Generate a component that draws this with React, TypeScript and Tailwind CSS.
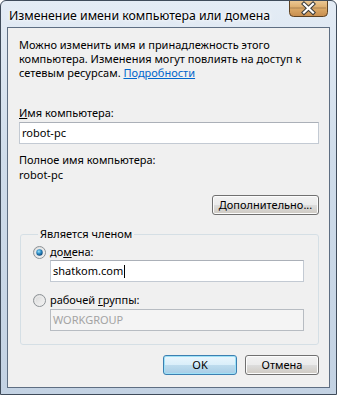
import React from 'react';

const font = "font-['Noto_Sans','Liberation_Sans',sans-serif]";

function Radio({ checked }: { checked?: boolean }) {
  return (
    <svg width="13" height="13" viewBox="0 0 13 13" className="shrink-0">
      <defs>
        <linearGradient id={checked ? 'rg1' : 'rg0'} x1="0" y1="0" x2="1" y2="1">
          <stop offset="0" stopColor="#d4d4d4" />
          <stop offset="1" stopColor="#f9f9f9" />
        </linearGradient>
        <radialGradient id="dot" cx="0.4" cy="0.35" r="0.7">
          <stop offset="0" stopColor="#9fe4fb" />
          <stop offset="0.5" stopColor="#2a8ac4" />
          <stop offset="1" stopColor="#0c3f6e" />
        </radialGradient>
      </defs>
      <circle cx="6.5" cy="6.5" r="6" fill={`url(#${checked ? 'rg1' : 'rg0'})`} stroke="#8d9296" />
      <circle cx="6.5" cy="6.5" r="4.3" fill="none" stroke="#ececec" strokeWidth="1" />
      {checked && <circle cx="6.5" cy="6.5" r="3.2" fill="url(#dot)" />}
    </svg>
  );
}

function Btn({ children, w, primary }: { children: React.ReactNode; w: string; primary?: boolean }) {
  return (
    <div
      className={`${w} h-[20px] rounded-[3px] border flex items-center justify-center text-[11px] leading-[14px] text-black ${
        primary
          ? 'border-[#3c7fb1] bg-[linear-gradient(#eaf6fd_0%,#d9eefa_50%,#bedcee_50%,#a7cde6_100%)] shadow-[inset_0_0_0_1px_#9ee1f7]'
          : 'border-[#707070] bg-[linear-gradient(#f2f2f2_0%,#ebebeb_50%,#dddddd_50%,#cfcac2_100%)] shadow-[inset_0_0_0_1px_#fcfcfc]'
      }`}
    >
      {children}
    </div>
  );
}

function CloseButton() {
  return (
    <svg width="39" height="17" viewBox="0 0 39 17">
      <defs>
        <linearGradient id="cb" x1="0" y1="0" x2="0" y2="1">
          <stop offset="0" stopColor="#edcc9a" />
          <stop offset="0.5" stopColor="#dcaa68" />
          <stop offset="1" stopColor="#c88d4e" />
        </linearGradient>
      </defs>
      <path d="M0.5 0 V12.5 Q0.5 16.5 4.5 16.5 H34.5 Q38.5 16.5 38.5 12.5 V0" fill="url(#cb)" stroke="#5d4224" />
      <path d="M1.5 8 H37.5" stroke="#6f5436" strokeWidth="1.5" strokeDasharray="1 1" opacity="0.6" />
      <path d="M15 4 L24 12.5 M24 4 L15 12.5" stroke="#3a3a3a" strokeWidth="4.2" strokeLinecap="square" />
      <path d="M15 4 L24 12.5 M24 4 L15 12.5" stroke="#ffffff" strokeWidth="2.2" strokeLinecap="square" />
    </svg>
  );
}

export default function App() {
  return (
    <div className={`${font} w-[337px] h-[395px] flex flex-col rounded-t-[6px] border border-[#3f4b5a] bg-[linear-gradient(180deg,#e4ecf5_0%,#cfdcea_40%,#c3d2e3_100%)] overflow-hidden`}>
      {/* Title bar */}
      <div className="h-[26px] shrink-0 flex items-start justify-between pl-[8px] pr-[8px]">
        <span className="mt-[7px] text-[12.3px] leading-[15px] text-black [text-shadow:0_0_6px_#ffffff,0_0_3px_#ffffff]">
          Изменение имени компьютера или домена
        </span>
        <div className="-mt-px">
          <CloseButton />
        </div>
      </div>

      {/* Client area */}
      <div className="mx-[6px] h-[361px] shrink-0 border border-[#5e6e82] bg-[#f0f0f0] flex flex-col px-[11px] pt-[10px] text-[11px] leading-[14px] text-black">
        <p>
          Можно изменить имя и принадлежность этого
          <br />
          компьютера. Изменения могут повлиять на доступ к
          <br />
          сетевым ресурсам. <span className="text-[#0066cc] underline">Подробности</span>
        </p>

        <div className="mt-[26px]">
          <span className="underline">И</span>мя компьютера:
        </div>
        <div className="mt-[2px] h-[22px] mr-[-1px] border border-[#c3cad3] border-t-[#abb0b8] bg-white flex items-center px-[2px]">
          robot-pc
        </div>

        <div className="mt-[9px]">Полное имя компьютера:</div>
        <div className="mt-px">robot-pc</div>

        <div className="mt-[13px] flex justify-end mr-[-1px]">
          <Btn w="w-[107px]">
            <span className="underline">Д</span>ополнительно...
          </Btn>
        </div>

        <fieldset className="mt-[12px] ml-px mr-[-1px] rounded-[3px] border border-[#d5dfe5] pl-[12px] pr-[14px] pb-[13px]">
          <legend className="ml-[5px] px-[2px]">Является членом</legend>
          <div className="mt-[4px] flex items-center gap-[4px]">
            <Radio checked />
            <span>
              до<span className="underline">м</span>ена:
            </span>
          </div>
          <div className="mt-px ml-[17px] h-[22px] border border-[#c3cad3] border-t-[#abb0b8] bg-white flex items-center px-[2px]">
            shatkom.com
            <span className="ml-px inline-block w-px h-[13px] bg-black" />
          </div>
          <div className="mt-[11px] flex items-center gap-[4px]">
            <Radio />
            <span>
              рабочей <span className="underline">г</span>руппы:
            </span>
          </div>
          <div className="mt-[2px] ml-[17px] h-[22px] border border-[#b7bcc2] bg-[#f4f4f4] flex items-center px-[2px] text-[#a3a3a3]">
            WORKGROUP
          </div>
        </fieldset>

        <div className="mt-[10px] flex justify-end gap-[8px] mr-[-1px]">
          <Btn w="w-[74px]" primary>
            OK
          </Btn>
          <Btn w="w-[74px]">Отмена</Btn>
        </div>
      </div>
    </div>
  );
}
